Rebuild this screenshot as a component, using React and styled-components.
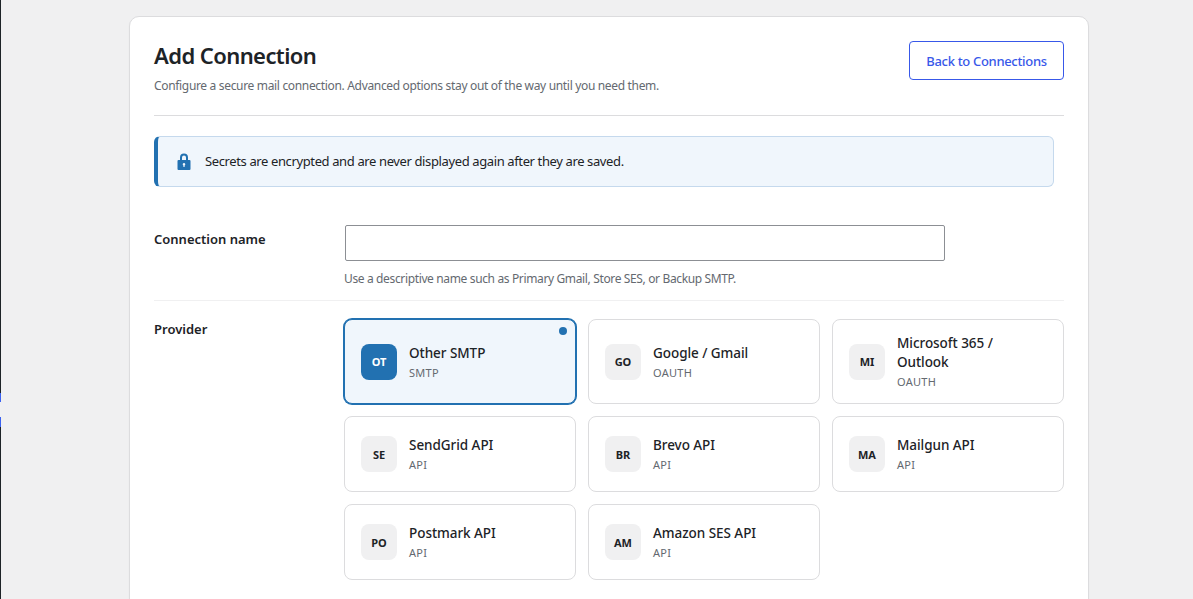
import React from "react";
import styled, { createGlobalStyle } from "styled-components";

const Global = createGlobalStyle`
  html, body { margin: 0; padding: 0; height: 100%; overflow: hidden; background: #f0f0f1; }
  body { font-family: "Noto Sans", "Open Sans", sans-serif; color: #1d2327; }
  #root { height: 100%; }
  * { box-sizing: border-box; }
`;
const Page = styled.div`display: flex; height: 599px; overflow: hidden;`;
const Rail = styled.div`width: 1px; flex: none; display: flex; flex-direction: column;`;
const RailPart = styled.span`
  display: block; flex: ${p => p.$fill ? "1" : "none"}; height: ${p => p.$h || 0}px; background: ${p => p.$color};
`;
const Main = styled.main`flex: 1; padding: 16px 0 0 128px; min-width: 0;`;
const Card = styled.section`
  width: 960px; background: #fff; border: 1px solid #dcdcde; border-radius: 10px; padding: 23px 24px 40px 24px; box-shadow: 0 1px 2px rgba(0,0,0,.04);
`;
const Header = styled.header`
  display: flex; justify-content: space-between; align-items: flex-start; padding-bottom: 20px; border-bottom: 1px solid #dcdcde; height: 76px;
`;
const Title = styled.h1`margin: -1px 0 6px; font-size: 22px; letter-spacing: -.58px; line-height: 32px; font-weight: 600; color: #1d2327;`;
const Sub = styled.p`margin: 0; font-size: 12px; letter-spacing: -.33px; line-height: 18px; color: #646970;`;
const BackButton = styled.button`
  font: 500 13px/20px "Noto Sans", sans-serif; letter-spacing: -.32px; height: 39px; width: 155px; margin-top: 1px; padding: 0; background: #fff; color: #3858e9; border: 1px solid #3858e9; border-radius: 4px;
`;
const Notice = styled.div`
  margin-top: 20px; width: 900px; height: 51px; display: flex; align-items: center; gap: 14px; padding-left: 19px;
  background: #f0f6fc; border: 1px solid #c5d9ed; border-left: 4px solid #2271b1; border-radius: 6px; font-size: 13px; letter-spacing: -.38px; color: #1d2327;
`;
const NoticeText = styled.span`margin-bottom: 2px;`;
const Row = styled.div`
  display: grid; grid-template-columns: 190px 1fr; padding: ${p => p.$pad}; border-bottom: ${p => p.$line ? "1px solid #f0f0f1" : "0"};
`;
const Label = styled.label`font-size: 13px; font-weight: 600; line-height: 20px; color: #1d2327; padding-top: ${p => p.$top};`;
const Input = styled.input`
  display: block; width: 600px; height: 36px; margin-left: 1px; border: 1px solid #8c8f94; border-radius: 2px; background: #fff; outline: none;
`;
const Hint = styled.p`margin: 9px 0 0; font-size: 12px; letter-spacing: -.36px; line-height: 18px; color: #646970;`;
const Grid = styled.div`display: grid; grid-template-columns: repeat(3, 232px); gap: 12px;`;
const Provider = styled.div`
  position: relative; display: flex; align-items: center; gap: 12px; min-height: 76px; padding: 14px 16px 13px; border-radius: 8px;
  background: ${p => p.$selected ? "#f0f6fc" : "#fff"};
  border: 1px solid ${p => p.$selected ? "#2271b1" : "#dcdcde"};
  box-shadow: ${p => p.$selected ? "0 0 0 1px #2271b1" : "none"};
`;
const Badge = styled.span`
  flex: none; width: 36px; height: 36px; margin-top: -1px; border-radius: 8px; display: flex; align-items: center; justify-content: center;
  font-size: 11px; font-weight: 700; background: ${p => p.$selected ? "#2271b1" : "#f0f0f1"}; color: ${p => p.$selected ? "#fff" : "#1d2327"};
`;
const Text = styled.span`display: flex; flex-direction: column; min-width: 0;`;
const Name = styled.span`font-size: 13.5px; font-weight: 500; letter-spacing: -.05px; line-height: 19px; color: #1d2327;`;
const Kind = styled.span`margin-top: 2px; font-size: 11px; letter-spacing: .3px; line-height: 16px; color: #646970;`;
const Dot = styled.span`position: absolute; top: 7px; right: 8px; width: 8px; height: 8px; border-radius: 50%; background: #2271b1;`;

const providers = [
  ["OT", "Other SMTP", "SMTP", true],
  ["GO", "Google / Gmail", "OAUTH"],
  ["MI", "Microsoft 365 / Outlook", "OAUTH"],
  ["SE", "SendGrid API", "API"],
  ["BR", "Brevo API", "API"],
  ["MA", "Mailgun API", "API"],
  ["PO", "Postmark API", "API"],
  ["AM", "Amazon SES API", "API"],
];

const LockIcon = () => (
  <svg width="14" height="17" viewBox="0 0 14 17" aria-hidden="true">
    <path fill="#2271b1" fillRule="evenodd" d="M3 7V4.5a4 4 0 0 1 8 0V7h1.5a1 1 0 0 1 1 1v8a1 1 0 0 1-1 1h-11a1 1 0 0 1-1-1V8a1 1 0 0 1 1-1H3Zm2 0h4V4.5a2 2 0 0 0-4 0V7Zm2 3a1.3 1.3 0 0 0-.6 2.45V14h1.2v-1.55A1.3 1.3 0 0 0 7 10Z" />
  </svg>
);

export default function App() {
  return (
    <Page>
      <Global />
      <Rail>
        <RailPart $color="#1d2327" $h={393} />
        <RailPart $color="#3b62f0" $h={9} />
        <RailPart $color="transparent" $h={15} />
        <RailPart $color="#3b62f0" $h={10} />
        <RailPart $color="#1d2327" $fill />
      </Rail>
      <Main>
        <Card>
          <Header>
            <div>
              <Title>Add Connection</Title>
              <Sub>Configure a secure mail connection. Advanced options stay out of the way until you need them.</Sub>
            </div>
            <BackButton>Back to Connections</BackButton>
          </Header>
          <Notice><LockIcon /><NoticeText>Secrets are encrypted and are never displayed again after they are saved.</NoticeText></Notice>
          <Row $pad="38px 0 12px" $line>
            <Label $top="4px">Connection name</Label>
            <div>
              <Input type="text" />
              <Hint>Use a descriptive name such as Primary Gmail, Store SES, or Backup SMTP.</Hint>
            </div>
          </Row>
          <Row $pad="18px 0 0">
            <Label $top="0">Provider</Label>
            <Grid>
              {providers.map(([code, name, kind, selected]) => (
                <Provider key={code} $selected={selected}>
                  <Badge $selected={selected}>{code}</Badge>
                  <Text><Name>{name}</Name><Kind>{kind}</Kind></Text>
                  {selected && <Dot />}
                </Provider>
              ))}
            </Grid>
          </Row>
        </Card>
      </Main>
    </Page>
  );
}
